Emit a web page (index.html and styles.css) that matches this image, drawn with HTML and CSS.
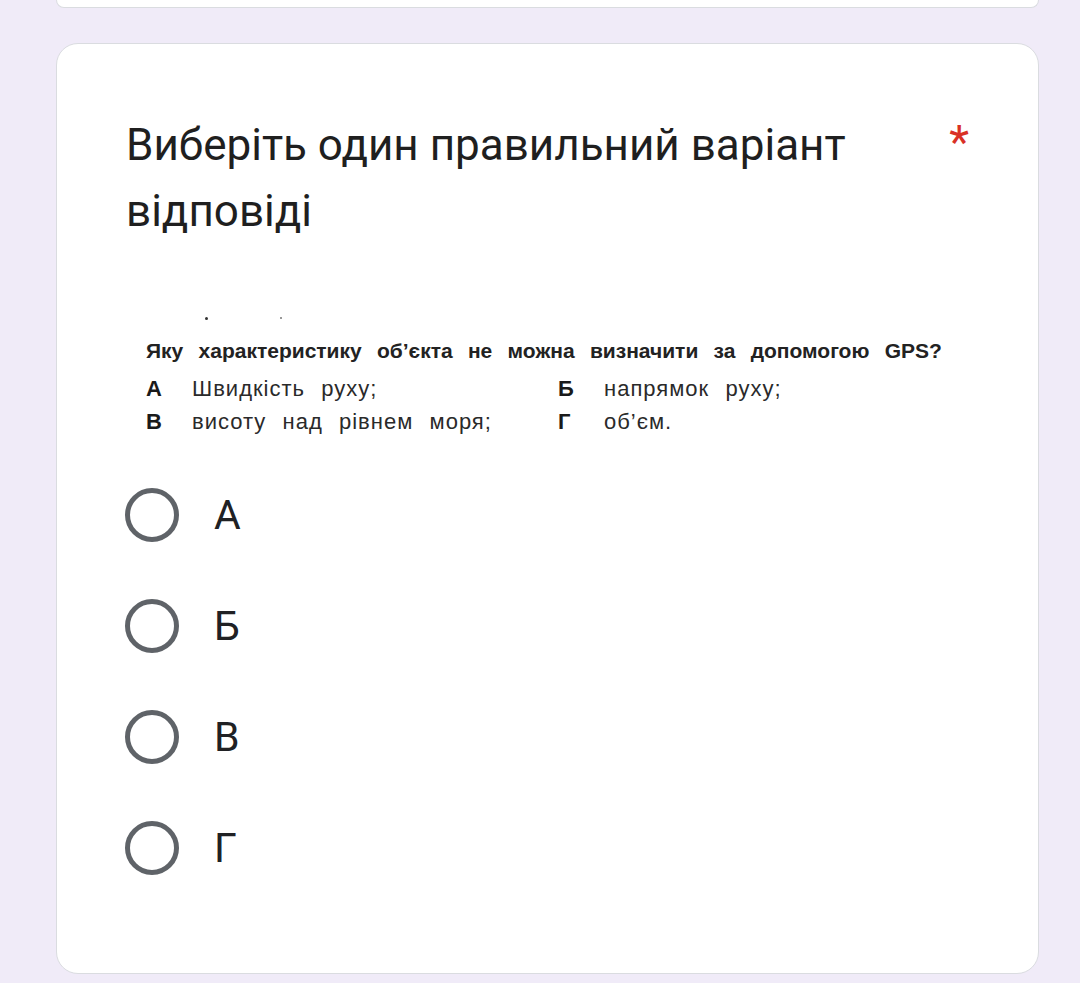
FILE: index.html
```html
<!DOCTYPE html>
<html lang="uk">
<head>
<meta charset="utf-8">
<title>Питання</title>
<link rel="stylesheet" href="styles.css">
</head>
<body>
<div class="page">
  <div class="card card-prev"></div>
  <div class="card card-question">
    <div class="title-row">
      <div class="title-text">Виберіть один правильний варіант відповіді</div>
      <span class="required">*</span>
    </div>
    <div class="question-image">
      <div class="dots"><span class="dot"></span><span class="dot dot-small"></span></div>
      <div class="q-line">Яку&nbsp; характеристику&nbsp; об’єкта&nbsp; не&nbsp; можна&nbsp; визначити&nbsp; за&nbsp; допомогою&nbsp; GPS?</div>
      <div class="q-options">
        <div class="q-opt"><span class="q-letter">А</span><span class="q-text">Швидкість&nbsp; руху;</span></div>
        <div class="q-opt"><span class="q-letter">Б</span><span class="q-text">напрямок&nbsp; руху;</span></div>
        <div class="q-opt"><span class="q-letter">В</span><span class="q-text">висоту&nbsp; над&nbsp; рівнем&nbsp; моря;</span></div>
        <div class="q-opt"><span class="q-letter">Г</span><span class="q-text">об’єм.</span></div>
      </div>
    </div>
    <div class="choices">
      <label class="choice"><span class="radio"></span><span class="choice-label">А</span></label>
      <label class="choice"><span class="radio"></span><span class="choice-label">Б</span></label>
      <label class="choice"><span class="radio"></span><span class="choice-label">В</span></label>
      <label class="choice"><span class="radio"></span><span class="choice-label">Г</span></label>
    </div>
  </div>
</div>
</body>
</html>
```

FILE: styles.css
```css
html, body {
  margin: 0;
  padding: 0;
  background: #f0ebf8;
}
body {
  font-family: Roboto, "Noto Sans", sans-serif;
  color: #202124;
  width: 1080px;
  height: 983px;
  overflow: hidden;
}
.page {
  display: flex;
  flex-direction: column;
  align-items: flex-start;
  padding-left: 56px;
}
.card {
  background: #fff;
  border: 1px solid #dadce0;
  box-sizing: border-box;
  width: 983px;
}
.card-prev {
  height: 8px;
  border-top: none;
  border-radius: 0 0 20px 20px;
}
.card-question {
  margin-top: 35px;
  height: 931px;
  border-radius: 22px;
  padding: 68px 69px 0 69px;
  display: flex;
  flex-direction: column;
}
.title-row {
  display: flex;
  align-items: flex-start;
}
.title-text {
  flex: 1;
  font-size: 44px;
  line-height: 66px;
  color: #1f1f1f;
  padding-right: 60px;
}
.required {
  color: #d93025;
  font-size: 46px;
  line-height: 66px;
  margin-top: -3px;
}
.question-image {
  margin-top: 57px;
  padding-left: 20px;
  font-family: "Liberation Sans", Arial, sans-serif;
  color: #1a1a1a;
}
.dots {
  height: 33px;
  display: flex;
  align-items: flex-start;
  padding-left: 59px;
  gap: 72px;
  box-sizing: border-box;
  padding-top: 16px;
}
.dot {
  width: 3px;
  height: 3px;
  border-radius: 50%;
  background: #333;
}
.dot-small {
  width: 2px;
  height: 2px;
  background: #777;
}
.q-line {
  font-size: 21px;
  font-weight: bold;
  line-height: 34px;
  white-space: nowrap;
  word-spacing: 1.8px;
  color: #222;
}
.q-options {
  margin-top: 4px;
  display: grid;
  grid-template-columns: 412px 1fr;
  font-size: 22px;
  line-height: 33px;
}
.q-opt {
  display: flex;
}
.q-letter {
  width: 46px;
  font-weight: bold;
}
.q-text {
  color: #2a2a2a;
  letter-spacing: 1px;
  word-spacing: 1px;
}
.choices {
  margin-top: 21px;
  display: flex;
  flex-direction: column;
}
.choice {
  height: 111px;
  display: flex;
  align-items: center;
}
.radio {
  width: 54px;
  height: 54px;
  box-sizing: border-box;
  border: 5px solid #5f6368;
  border-radius: 50%;
  margin-left: -1px;
}
.choice-label {
  margin-left: 35px;
  font-size: 41px;
  line-height: 48px;
  color: #202124;
}
```
